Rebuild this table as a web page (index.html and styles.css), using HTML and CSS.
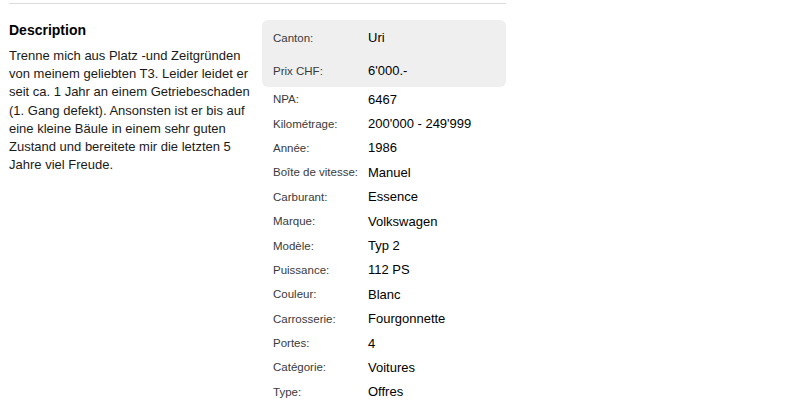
FILE: index.html
```html
<!DOCTYPE html>
<html lang="fr">
<head>
<meta charset="utf-8">
<title>Annonce</title>
<link rel="stylesheet" href="styles.css">
</head>
<body>
<div class="wrap">
  <div class="detail">
    <section class="desc">
      <h2 class="desc-title">Description</h2>
      <p class="desc-text">Trenne mich aus Platz -und Zeitgründen von meinem geliebten T3. Leider leidet er seit ca. 1 Jahr an einem Getriebeschaden (1. Gang defekt). Ansonsten ist er bis auf eine kleine Bäule in einem sehr guten Zustand und bereitete mir die letzten 5 Jahre viel Freude.</p>
    </section>
    <section class="specs">
      <div class="highlight">
        <div class="row row-hl"><span class="label">Canton:</span><span class="value">Uri</span></div>
        <div class="row row-hl"><span class="label">Prix CHF:</span><span class="value">6'000.-</span></div>
      </div>
      <div class="row"><span class="label">NPA:</span><span class="value">6467</span></div>
      <div class="row"><span class="label">Kilométrage:</span><span class="value">200'000 - 249'999</span></div>
      <div class="row"><span class="label">Année:</span><span class="value">1986</span></div>
      <div class="row"><span class="label">Boîte de vitesse:</span><span class="value">Manuel</span></div>
      <div class="row"><span class="label">Carburant:</span><span class="value">Essence</span></div>
      <div class="row"><span class="label">Marque:</span><span class="value">Volkswagen</span></div>
      <div class="row"><span class="label">Modèle:</span><span class="value">Typ 2</span></div>
      <div class="row"><span class="label">Puissance:</span><span class="value">112 PS</span></div>
      <div class="row"><span class="label">Couleur:</span><span class="value">Blanc</span></div>
      <div class="row"><span class="label">Carrosserie:</span><span class="value">Fourgonnette</span></div>
      <div class="row"><span class="label">Portes:</span><span class="value">4</span></div>
      <div class="row"><span class="label">Catégorie:</span><span class="value">Voitures</span></div>
      <div class="row"><span class="label">Type:</span><span class="value">Offres</span></div>
    </section>
  </div>
</div>
</body>
</html>
```
FILE: styles.css
```css
html, body {
  margin: 0;
  padding: 0;
  background: #fff;
}
body {
  font-family: "Liberation Sans", Arial, sans-serif;
  color: #111;
}
.wrap {
  margin: 3px 0 0 9px;
  width: 497px;
  border-top: 1px solid #dcdcdc;
}
.detail {
  display: flex;
  gap: 7px;
  padding-top: 16px;
}
.desc {
  width: 246px;
  flex: none;
}
.desc-title {
  margin: 2px 0 0;
  font-size: 14px;
  line-height: 17px;
  font-weight: bold;
  color: #000;
}
.desc-text {
  margin: 8px 0 0;
  font-size: 13px;
  line-height: 18.2px;
  color: #1a1a1a;
}
.specs {
  flex: 1;
  display: flex;
  flex-direction: column;
}
.highlight {
  background: #efefef;
  border-radius: 6px;
  padding-top: 1px;
}
.row {
  display: flex;
  align-items: center;
  height: 24.4px;
  padding-left: 11px;
}
.row-hl {
  height: 33px;
}
.label {
  width: 95px;
  flex: none;
  font-size: 11.5px;
  color: #3a3a3a;
}
.value {
  font-size: 13px;
  color: #000;
}
```
